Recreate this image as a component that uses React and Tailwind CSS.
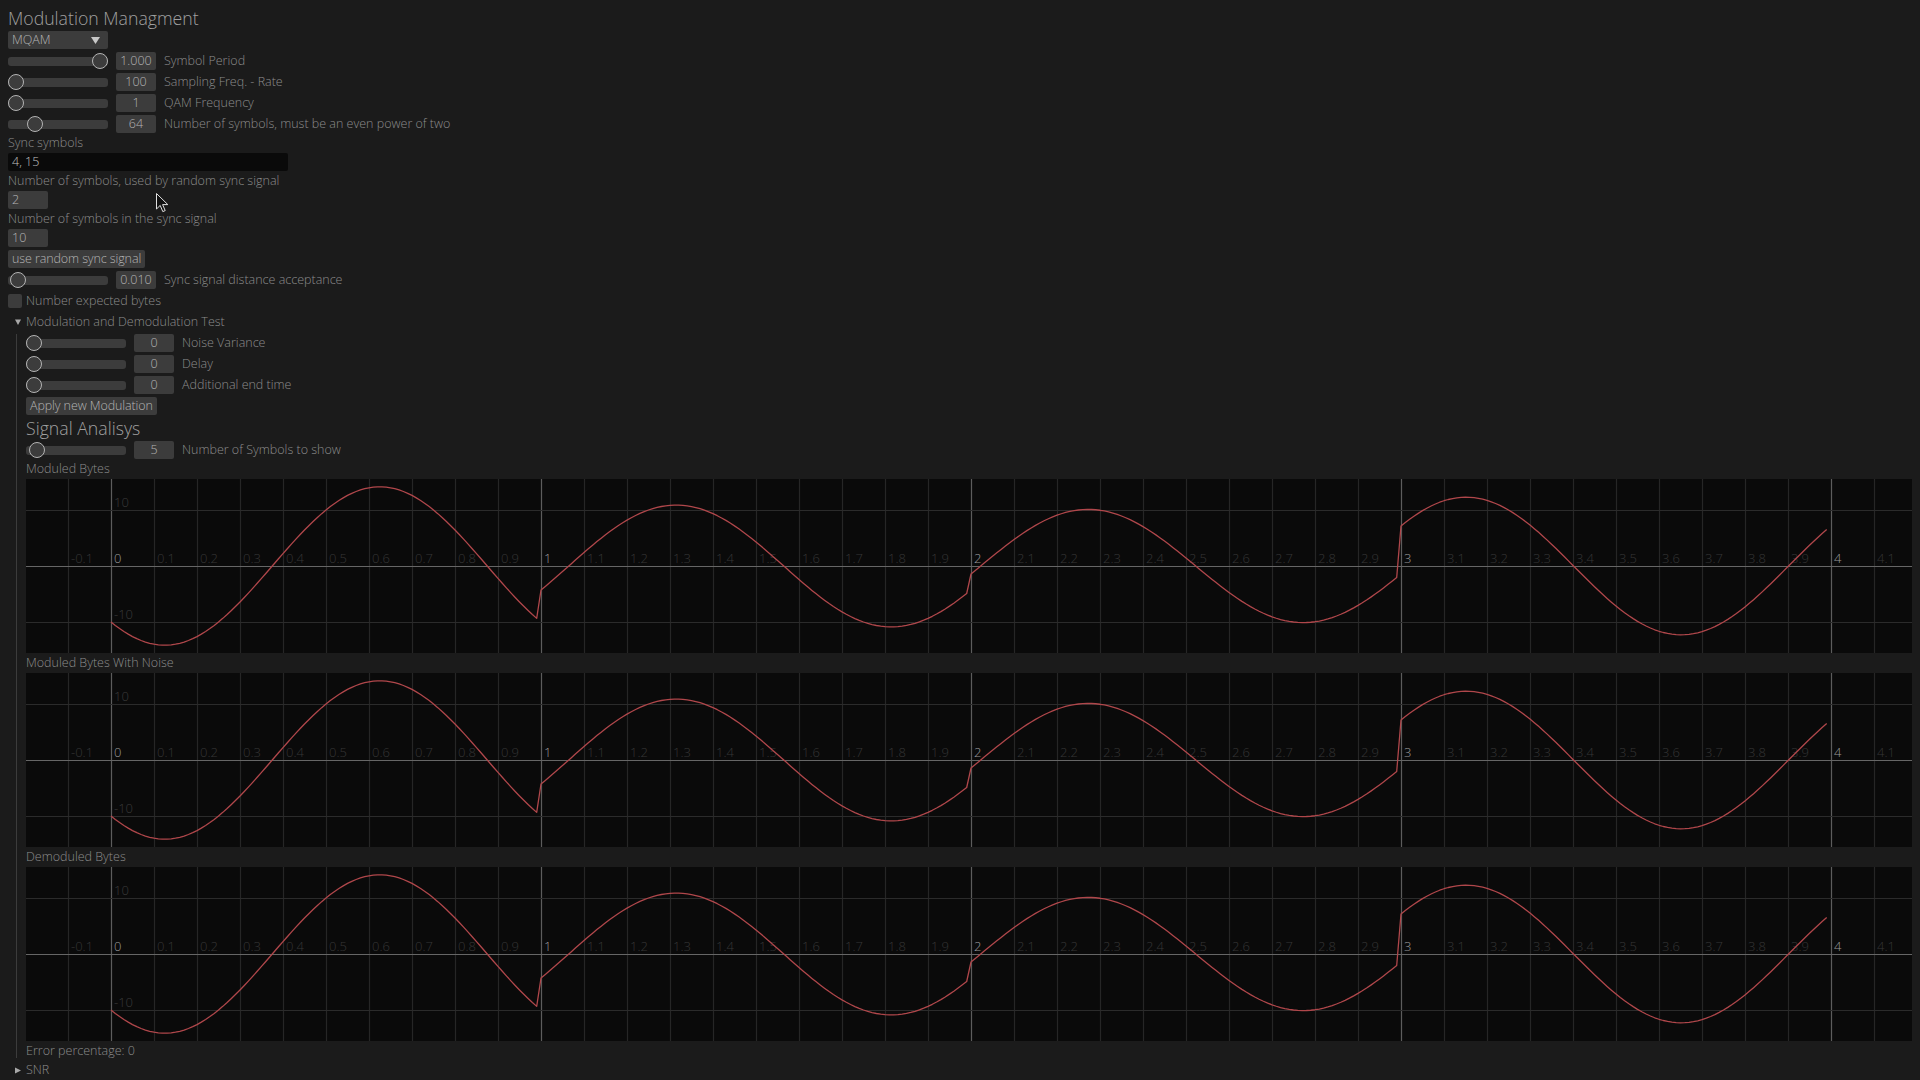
import React from "react";

const TEXT = "text-[#8c8c8c]";
const WTXT = "text-[#b4b4b4]";

function SliderRow({ frac, value, label }) {
  const left = 8 + frac * 84 - 8;
  return (
    <div className="flex h-[18px] items-center gap-[8px]">
      <div className="relative flex h-[18px] w-[100px] items-center">
        <div className="h-[9px] w-[100px] rounded-[3px] bg-[#3c3c3c]" />
        <div
          className="absolute top-[1px] h-[16px] w-[16px] rounded-full border border-[#b4b4b4] bg-[#3c3c3c]"
          style={{ left: `${left}px` }}
        />
      </div>
      <div className={`flex h-[18px] w-[40px] items-center justify-center rounded-[2px] bg-[#3c3c3c] ${WTXT}`}>
        {value}
      </div>
      <div className={TEXT}>{label}</div>
    </div>
  );
}

function Label({ children }) {
  return <div className={`h-[14px] leading-[14px] ${TEXT}`}>{children}</div>;
}

function Button({ children }) {
  return (
    <div className={`flex h-[18px] w-fit items-center rounded-[2px] bg-[#3c3c3c] px-[4px] tracking-[-0.1px] ${WTXT}`}>
      {children}
    </div>
  );
}

function Plot() {
  const W = 1886;
  const H = 174;
  const X = (t) => 85 + 430 * t;
  const Y = (v) => 87 - 5.6 * v;
  const segs = [
    [-10, -10],
    [-4.29, 10],
    [-1.43, 10],
    [7.14, 10],
  ];
  let d = "";
  for (let k = 0; k < 400; k++) {
    const t = k / 100;
    const [a, b] = segs[Math.floor(k / 100)];
    const v = a * Math.cos(2 * Math.PI * t) + b * Math.sin(2 * Math.PI * t);
    d += (k ? "L" : "M") + X(t).toFixed(2) + "," + Y(v).toFixed(2);
  }
  const ticks = [];
  for (let i = -1; i <= 41; i++) ticks.push(i);
  return (
    <svg width={W} height={H} className="block shrink-0">
      <rect x="0" y="0" width={W} height={H} fill="#0a0a0a" />
      {ticks.map((i) => {
        const x = Math.round(X(i / 10)) + 0.5;
        const major = i % 10 === 0;
        return (
          <line
            key={"v" + i}
            x1={x}
            x2={x}
            y1="0"
            y2={H}
            stroke={major ? "#5c5c5c" : "#262626"}
            strokeWidth="1.2"
          />
        );
      })}
      <line x1="0" x2={W} y1={Y(10) + 0.5} y2={Y(10) + 0.5} stroke="#2b2b2b" strokeWidth="1.2" />
      <line x1="0" x2={W} y1={Y(-10) + 0.5} y2={Y(-10) + 0.5} stroke="#2b2b2b" strokeWidth="1.2" />
      <line x1="0" x2={W} y1={Y(0) + 0.5} y2={Y(0) + 0.5} stroke="#666666" strokeWidth="1.2" />
      {ticks.map((i) => {
        const major = i % 10 === 0;
        const txt = major ? String(i / 10) : (i / 10).toFixed(1);
        return (
          <text
            key={"t" + i}
            x={X(i / 10) + 3}
            y={Y(0) - 3}
            fontSize="13"
            fill={major ? "#9a9a9a" : "#363636"}
            fontFamily="'Open Sans', 'Noto Sans', sans-serif"
          >
            {txt}
          </text>
        );
      })}
      <text x={X(0) + 3} y={Y(10) - 3} fontSize="13" fill="#3a3a3a" fontFamily="'Open Sans', 'Noto Sans', sans-serif">
        10
      </text>
      <text x={X(0) + 3} y={Y(-10) - 3} fontSize="13" fill="#3a3a3a" fontFamily="'Open Sans', 'Noto Sans', sans-serif">
        -10
      </text>
      <path d={d} fill="none" stroke="#b0474b" strokeWidth="1.3" strokeLinejoin="round" />
    </svg>
  );
}

function TriDown() {
  return (
    <svg width="6" height="6" viewBox="0 0 6 6" className="block">
      <polygon points="0,0.5 6,0.5 3,6" fill="#a8a8a8" />
    </svg>
  );
}

function TriRight() {
  return (
    <svg width="6" height="7" viewBox="0 0 6 7" className="block">
      <polygon points="0,0.5 6,3.5 0,6.5" fill="#a8a8a8" />
    </svg>
  );
}

export default function App() {
  return (
    <div className="relative flex h-[1080px] w-[1920px] flex-col gap-[3px] overflow-hidden bg-[#1b1b1b] px-[8px] pt-[8px] font-['Open_Sans','Noto_Sans',sans-serif] text-[12.5px] font-light leading-[18px]">
      <div className="h-[20px] text-[17.7px] leading-[20px] text-[#a0a0a0]">Modulation Managment</div>
      <div className={`flex h-[18px] w-[100px] items-center justify-between rounded-[2px] bg-[#3c3c3c] pl-[4px] pr-[8px] ${WTXT}`}>
        <span>MQAM</span>
        <svg width="9" height="7" viewBox="0 0 9 7" className="block">
          <polygon points="0,0 9,0 4.5,7" fill="#c8c8c8" />
        </svg>
      </div>
      <SliderRow frac={1} value="1.000" label="Symbol Period" />
      <SliderRow frac={0} value="100" label="Sampling Freq. - Rate" />
      <SliderRow frac={0} value="1" label="QAM Frequency" />
      <SliderRow frac={0.226} value="64" label="Number of symbols, must be an even power of two" />
      <Label>Sync symbols</Label>
      <div className={`flex h-[18px] w-[280px] items-center rounded-[2px] bg-[#0a0a0a] px-[4px] text-[#c0c0c0]`}>4, 15</div>
      <Label>Number of symbols, used by random sync signal</Label>
      <div className={`flex h-[18px] w-[40px] items-center rounded-[2px] bg-[#3c3c3c] px-[4px] ${WTXT}`}>2</div>
      <Label>Number of symbols in the sync signal</Label>
      <div className={`flex h-[18px] w-[40px] items-center rounded-[2px] bg-[#3c3c3c] px-[4px] ${WTXT}`}>10</div>
      <Button>use random sync signal</Button>
      <SliderRow frac={0.02} value="0.010" label="Sync signal distance acceptance" />
      <div className="flex h-[18px] items-center gap-[4px]">
        <div className="h-[14px] w-[14px] rounded-[2px] bg-[#3c3c3c]" />
        <div className={TEXT}>Number expected bytes</div>
      </div>
      <div className="flex h-[18px] items-center">
        <div className="flex w-[18px] justify-start pl-[7px]">
          <TriDown />
        </div>
        <div className={TEXT}>Modulation and Demodulation Test</div>
      </div>
      <div className="ml-[8px] flex flex-col gap-[3px] border-l border-[#3c3c3c] pl-[9px]">
        <SliderRow frac={0} value="0" label="Noise Variance" />
        <SliderRow frac={0} value="0" label="Delay" />
        <SliderRow frac={0} value="0" label="Additional end time" />
        <Button>Apply new Modulation</Button>
        <div className="h-[20px] text-[17.7px] leading-[20px] text-[#a0a0a0]">Signal Analisys</div>
        <SliderRow frac={0.04} value="5" label="Number of Symbols to show" />
        <Label>Moduled Bytes</Label>
        <Plot />
        <Label>Moduled Bytes With Noise</Label>
        <Plot />
        <Label>Demoduled Bytes</Label>
        <Plot />
        <Label>Error percentage: 0</Label>
      </div>
      <div className="flex h-[18px] items-center">
        <div className="flex w-[18px] justify-start pl-[7px]">
          <TriRight />
        </div>
        <div className={TEXT}>SNR</div>
      </div>
      <svg
        width="13"
        height="20"
        viewBox="0 0 13 20"
        className="absolute left-[156px] top-[193px]"
      >
        <path d="M0.5,0.5 L0.5,16 L4.2,12.4 L6.8,18.6 L9.2,17.6 L6.6,11.6 L11.8,11.6 Z" fill="#111" stroke="#e0e0e0" strokeWidth="1" />
      </svg>
    </div>
  );
}
